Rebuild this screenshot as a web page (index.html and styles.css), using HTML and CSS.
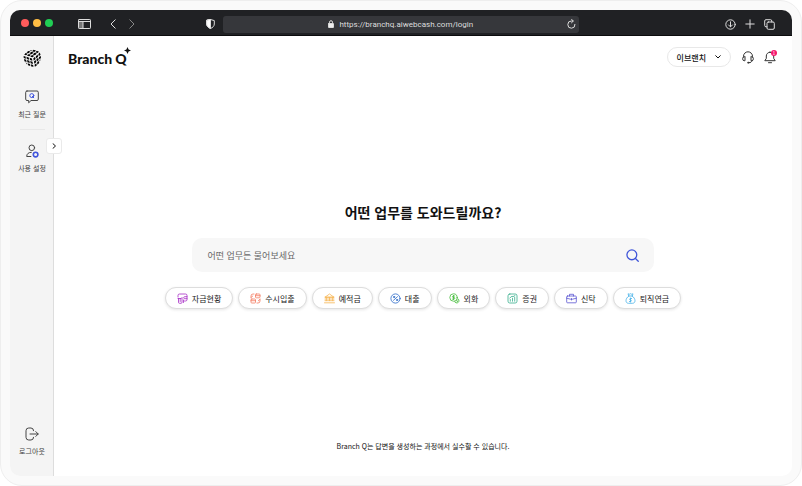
FILE: index.html
```html
<!DOCTYPE html>
<html lang="ko">
<head>
<meta charset="utf-8">
<meta name="viewport" content="width=device-width, initial-scale=1">
<title>Branch Q</title>
<link rel="stylesheet" href="styles.css">
</head>
<body>
<div class="frame">
<div class="window">
  <header class="browser">
    <div class="browser-left">
      <span class="dots"><i class="dot red"></i><i class="dot yellow"></i><i class="dot lime"></i></span>
      <button class="tool panel" aria-label="사이드바"><svg width="13" height="10" viewBox="0 0 13 10"><path d="M.5 2.500h4.500v7H.5z" fill="#777" stroke="none"/><rect x=".5" y=".5" width="12" height="9" rx=".7"/><path d="M.5 2.500h12M5 2.500v7"/></svg></button>
      <button class="tool back" aria-label="뒤로"><svg width="6" height="10" viewBox="0 0 6 10"><path d="M5.200.8 1 5l4.200 4.200"/></svg></button>
      <button class="tool forward" aria-label="앞으로"><svg width="6" height="10" viewBox="0 0 6 10"><path d="M.8.8 5 5 .8 9.200"/></svg></button>
    </div>
    <div class="browser-center">
      <button class="tool" aria-label="개인정보 보호"><svg width="9" height="10" viewBox="0 0 9 10"><path d="M4.500.5 8.300 1.600v3.400c0 2-1.500 3.600-3.800 4.500C2.200 8.600.7 7 .7 5V1.600z"/><path d="M4.500.5v9C2.200 8.600.7 7 .7 5V1.600z" fill="#fff"/></svg></button>
      <div class="address">
        <svg class="lock" width="6" height="8" viewBox="0 0 6 8"><path d="M1.500 3.500V2.200a1.500 1.500 0 0 1 3 0v1.300"/><rect x=".4" y="3.500" width="5.200" height="4" rx=".5" fill="#eee"/></svg>
        <span>https://branchq.aiwebcash.com/login</span>
        <button class="tool reload" aria-label="새로고침"><svg width="9" height="10" viewBox="0 0 9 10"><path d="M8 5.400A3.600 3.600 0 1 1 4.500 2H6M4.500.3 6.300 2 4.500 3.800"/></svg></button>
      </div>
    </div>
    <div class="browser-right">
      <button class="tool" aria-label="다운로드"><svg width="11" height="11" viewBox="0 0 11 11"><circle cx="5.500" cy="5.500" r="4.700"/><path d="M5.500 2.800v5M3.500 5.900l2 2 2-2"/></svg></button>
      <button class="tool" aria-label="새 탭"><svg width="10" height="10" viewBox="0 0 10 10"><path d="M5 .8v8.400M.8 5h8.400"/></svg></button>
      <button class="tool" aria-label="탭 보기"><svg width="11" height="11" viewBox="0 0 11 11"><rect x="3" y="3" width="7.300" height="7.300" rx="1.300"/><path d="M3 7.800H2A1.300 1.300 0 0 1 .7 6.500V2A1.300 1.300 0 0 1 2 .7h4.500A1.300 1.300 0 0 1 7.800 2v1"/></svg></button>
    </div>
  </header>

  <div class="app">
    <nav class="sidebar">
      <a class="mark" href="#" aria-label="홈"><svg width="20" height="20" viewBox="0 0 20 20">
        <defs><path id="tiles" d="M.14.14h.72v.72h-.72zM1.140.14h.72v.72h-.72zM2.140.14h.6l.1.72h-.7zM.14 1.140h.72v.72h-.72zM1.140 1.140h.72v.72h-.72zM2.140 1.140h.66v.72h-.66zM.14 2.140h.72v.7l-.72-.1zM1.140 2.140h.72v.66h-.72zM2.140 2.140h.5l-.5.4z"/></defs>
        <g fill="#050505" stroke="none">
          <use href="#tiles" transform="matrix(-3.200 -1 2.500 -2.200 10.600 9.800)"/>
          <use href="#tiles" transform="matrix(2.500 -2.200 .6 3.200 10.900 10.200)"/>
          <use href="#tiles" transform="matrix(.6 3.200 -3.200 -1 10.300 10.200)"/>
        </g></svg></a>
      <a class="nav-item recent" href="#"><svg width="14" height="14" viewBox="0 0 14 14"><path d="M2 1h10a1.300 1.300 0 0 1 1.300 1.300v6.900a1.300 1.300 0 0 1-1.300 1.300H6L3.700 12.800v-2.300H2A1.300 1.300 0 0 1 .7 9.200V2.300A1.300 1.300 0 0 1 2 1z"/><path class="accent" d="M8.800 5.600a2 2 0 1 1-4 0 2 2 0 0 1 4 0zM7.300 6.300l1.500 1.500"/></svg><span>최근 질문</span></a>
      <hr>
      <a class="nav-item settings" href="#"><svg width="14" height="14" viewBox="0 0 14 14"><circle cx="6.800" cy="3.800" r="2.800"/><path d="M6.300 8.300C3.600 8.300 1.700 9.800 1.700 12.500h4.200"/><circle class="accent gear" cx="10.600" cy="10.600" r="2.300"/></svg><span>사용 설정</span></a>
      <a class="nav-item logout" href="#"><svg width="14" height="14" viewBox="0 0 14 14"><path d="M8.600 3.700A2.700 2.700 0 0 0 6 1H3.700A2.700 2.700 0 0 0 1 3.700v6.600A2.700 2.700 0 0 0 3.700 13H6a2.700 2.700 0 0 0 2.600-2.700M5 7h8.200M10.800 4.600 13.200 7l-2.400 2.400"/></svg><span>로그아웃</span></a>
      <button class="expand" aria-label="메뉴 펼치기"><svg width="5" height="6" viewBox="0 0 5 6"><path d="m1 .7 2.500 2.300L1 5.300"/></svg></button>
    </nav>

    <main class="main">
      <div class="topbar">
        <a class="brand" href="#">Branch<span>Q</span><svg width="7" height="7" viewBox="0 0 7 7"><path d="M3.500 0 4.600 2.400 7 3.500 4.600 4.600 3.500 7 2.400 4.600 0 3.500 2.400 2.400z"/></svg></a>
        <div class="actions">
          <button class="account">이브랜치<svg width="6" height="4" viewBox="0 0 6 4"><path d="m.7.7 2.300 2.300L5.300.7"/></svg></button>
          <button class="icon-button" aria-label="고객센터"><svg width="12" height="13" viewBox="0 0 12 13"><path d="M1.500 6V5.300a4.500 4.500 0 0 1 9 0V6M3 5.700v4H2.200A1.600 1.600 0 0 1 .7 8.100v-.8A1.600 1.600 0 0 1 2.200 5.700zM9 5.700v4h.8a1.600 1.600 0 0 0 1.500-1.600v-.8a1.600 1.600 0 0 0-1.500-1.600zM10 9.700c-.2 1.300-1.200 2-3 2"/><circle cx="6.200" cy="11.700" r=".6"/></svg></button>
          <button class="icon-button" aria-label="알림 1개"><svg width="12" height="13" viewBox="0 0 12 13"><path d="M6 1.200A3.700 3.700 0 0 0 2.300 5v2.400L.8 9.700h10.400L9.700 7.400V5A3.700 3.700 0 0 0 6 1.200zM4.500 11.700h3"/></svg><span class="badge">1</span></button>
        </div>
      </div>

      <section class="ask">
        <h1>어떤 업무를 도와드릴까요?</h1>
        <form class="search">
          <input type="text" aria-label="업무 질문" placeholder="어떤 업무든 물어보세요">
          <button type="button" aria-label="검색"><svg width="13" height="13" viewBox="0 0 14 14"><circle cx="6.300" cy="6.300" r="5.300"/><path d="m10.200 10.200 3 3"/></svg></button>
        </form>
        <div class="chips">
          <button class="chip purple"><svg width="11" height="11" viewBox="0 0 11 11"><path d="M1 4V2.500A1.500 1.500 0 0 1 2.500 1h6A1.500 1.500 0 0 1 10 2.500v4A1.500 1.500 0 0 1 8.500 8H7.500M10 3.700H7.700a1 1 0 0 0 0 2H10M1 5.500h3M1.500 5.500v3.800a1 1 0 0 0 1 1H4a1 1 0 0 0 1-1V4.500M3.200 5.500v3M6.500 7v2.500"/></svg>자금현황</button>
          <button class="chip coral"><svg width="11" height="11" viewBox="0 0 11 11"><rect x="5.500" y="1" width="4.500" height="3.800" rx=".8"/><rect x="1" y="6" width="4.500" height="4" rx=".8"/><path d="M5.500 2.700H10M1 7.700h4.500M1 4.500V3a2 2 0 0 1 2-2h1M2.800 3l-1.800 1.500M10 6.300V8a2 2 0 0 1-2 2H7M8.300 7.800 10 6.300"/></svg>수시입출</button>
          <button class="chip amber"><svg width="11" height="11" viewBox="0 0 11 11"><path d="M1.300 4 5.500 1l4.200 3zM1 4.200h9M2.300 4.500v3.200M5.500 4.500v3.200M8.700 4.500v3.200M1 7.700h9M.5 9.800h10M1 6h9"/></svg>예적금</button>
          <button class="chip blue"><svg width="11" height="11" viewBox="0 0 11 11"><circle cx="5.500" cy="5.500" r="4.600"/><path d="m3.500 7.300 4-3.600"/><circle cx="4" cy="4" r=".7"/><circle cx="7" cy="7" r=".7"/></svg>대출</button>
          <button class="chip green"><svg width="11" height="11" viewBox="0 0 11 11"><circle cx="4.500" cy="4.500" r="3.700"/><path d="M5.700 3H4a.8.8 0 0 0 0 1.500h1a.8.8 0 0 1 0 1.600H3.300M4.500 2.400v4.200M8.800 5.500a2.400 2.400 0 1 1-3.300 3.200M7 8l1.500-1M8 9l1-1"/></svg>외화</button>
          <button class="chip teal"><svg width="11" height="11" viewBox="0 0 11 11"><rect x="1" y="1" width="9" height="9" rx="1.800"/><path d="M3.300 8.200V6.500M5.500 8.200v-3M7.700 8.200v-4M2.800 5 5 3.200l1 .5L8 2.500"/></svg>증권</button>
          <button class="chip indigo"><svg width="11" height="11" viewBox="0 0 11 11"><rect x=".7" y="3" width="9.600" height="6.800" rx=".8"/><path d="M3.500 3V1.300h4V3M.7 5.200l3.800 1h2l3.800-1M5.500 5.500v1.500"/></svg>신탁</button>
          <button class="chip sky"><svg width="11" height="11" viewBox="0 0 11 11"><path d="M3.800 3 3 .8l1.500.4 1-.5 1 .5L8 .8 7.200 3M3.500 3h4M3.800 3C2 4.300 1 6 1 7.700 1 9.300 2 10.300 3.500 10.300h4C9 10.300 10 9.300 10 7.700 10 6 9 4.300 7.200 3M6.600 5.500H5.200a.8.8 0 0 0 0 1.500h.6a.8.8 0 0 1 0 1.500H4.400M5.500 5v4"/></svg>퇴직연금</button>
        </div>
      </section>
      <p class="notice">Branch Q는 답변을 생성하는 과정에서 실수할 수 있습니다.</p>
    </main>
  </div>
</div>
</div>
</body>
</html>
```
FILE: styles.css
```css
* { box-sizing: border-box; }
body {
  margin: 0;
  background: #fff;
  color: #111;
  font-family: "Noto Sans CJK KR", sans-serif;
  font-size: 8px;
}
button, input { font: inherit; color: inherit; }
button { border: 0; padding: 0; background: none; cursor: pointer; }
a { color: inherit; text-decoration: none; }
svg { display: block; flex: none; fill: none; stroke: currentColor; stroke-linecap: round; stroke-linejoin: round; }

.frame {
  display: flex;
  min-height: 100vh;
  padding: 9px;
  border: 1px solid #eee;
  border-radius: 22px;
  background: #fafafa;
}
.window {
  display: flex;
  flex: 1;
  flex-direction: column;
  overflow: hidden;
  border-radius: 10px;
  background: #fff;
}

.browser {
  display: grid;
  grid-template-columns: 25fr 50fr 26fr;
  align-items: center;
  height: 26px;
  padding: 3px 17px 0 11px;
  border-bottom: 1px solid #0c0c0e;
  background: #202124;
  color: #ddd;
}
.browser-left, .browser-center, .browser-right, .dots { display: flex; align-items: center; }
.dots { gap: 4px; margin-top: -3px; }
.dot { width: 8px; height: 8px; border-radius: 50%; }
.red { background: #ff5c5c; }
.yellow { background: #ffbd44; }
.lime { background: #20ce54; }
.panel { margin-left: 25px; }
.back { margin-left: 19px; }
.forward { margin-left: 13px; color: #888; }
.browser-center { gap: 8px; margin-left: -2px; margin-right: 2px; }
.browser-right { justify-content: flex-end; gap: 9px; }
.address {
  position: relative;
  display: flex;
  flex: 1;
  align-items: center;
  justify-content: center;
  gap: 5px;
  height: 17px;
  border-radius: 3px;
  background: #36373b;
  font-family: Roboto, sans-serif;
}
.reload { position: absolute; right: 3px; }

.app { display: flex; flex: 1; }
.sidebar {
  position: relative;
  display: flex;
  flex-direction: column;
  align-items: center;
  width: 44px;
  padding: 12px 0 20px 1px;
  border-right: 1px solid #ddd;
  background: #f4f4f4;
}
.recent { margin-top: 22px; }
.sidebar hr { width: 25px; margin: 10px 0 14px; border: 0; border-top: 1px solid #e8e8e8; }
.nav-item {
  display: flex;
  flex-direction: column;
  align-items: center;
  gap: 5px;
  color: #444;
  font-size: 7px;
  line-height: 10px;
  white-space: nowrap;
}
.nav-item .accent { stroke: #4055dc; }
.nav-item .gear { stroke-width: 1.6; }
.logout { margin-top: auto; }
.expand {
  position: absolute;
  top: 102px;
  right: -9px;
  display: grid;
  place-items: center;
  width: 16px;
  height: 16px;
  border: 1px solid #eaeaea;
  border-radius: 3px;
  background: #fff;
}

.main { display: flex; flex: 1; flex-direction: column; min-width: 0; }
.topbar {
  display: flex;
  align-items: center;
  justify-content: space-between;
  padding: 10px 16px 0 14px;
}
.brand {
  position: relative;
  display: flex;
  gap: 3px;
  padding-top: 4px;
  color: #111;
  font-family: Lato, sans-serif;
  font-size: 14px;
  font-weight: 900;
  line-height: 18px;
}
.brand svg { position: absolute; top: 1px; right: -4px; fill: #111; stroke: none; }
.actions { display: flex; align-items: center; gap: 10px; }
.account {
  display: flex;
  align-items: center;
  gap: 9px;
  height: 20px;
  margin-right: 1px;
  padding: 0 9px 0 9px;
  border: 1px solid #e8e8e8;
  border-radius: 10px;
  font-weight: 500;
}
.icon-button { position: relative; color: #333; }
.badge {
  position: absolute;
  top: -1px;
  right: -1px;
  width: 6px;
  height: 6px;
  border-radius: 50%;
  background: #f5196c;
  color: #fff;
  font-size: 5px;
  line-height: 6px;
  text-align: center;
}

.ask {
  display: flex;
  flex: 1;
  flex-direction: column;
  align-items: center;
  justify-content: center;
  padding-top: 2px;
}
.ask h1 { margin: 0 0 16px; font-size: 14px; font-weight: 700; line-height: 20px; }
.search {
  display: flex;
  align-items: center;
  width: 62.5%;
  min-width: 320px;
  height: 34px;
  padding: 0 15px;
  border-radius: 10px;
  background: #f7f7f7;
}
.search input {
  flex: 1;
  min-width: 0;
  padding: 0;
  border: 0;
  outline: 0;
  background: none;
  font-size: 9px;
}
.search input::placeholder { color: #666; opacity: 1; }
.search button { color: #3f55d9; }
.search svg { stroke-width: 1.4; }
.chips { display: flex; flex-wrap: wrap; justify-content: center; gap: 5px; margin-top: 15px; }
.chip {
  display: flex;
  align-items: center;
  gap: 4px;
  height: 22px;
  padding: 0 11px;
  border: 1px solid #ddd;
  border-radius: 11px;
  background: #fff;
  box-shadow: 0 1px 3px #0000001a;
  color: #222;
  white-space: nowrap;
}
.chip svg { stroke-width: .8; }
.purple svg { color: #a62bc5; }
.coral svg { color: #f47c62; }
.amber svg { color: #f6b553; }
.blue svg { color: #2868c8; }
.green svg { color: #45bd3b; }
.teal svg { color: #35ad8b; }
.indigo svg { color: #5b55d2; }
.sky svg { color: #49b3e8; }
.notice { margin: 0; padding-bottom: 25px; font-size: 7px; line-height: 10px; text-align: center; }
```
